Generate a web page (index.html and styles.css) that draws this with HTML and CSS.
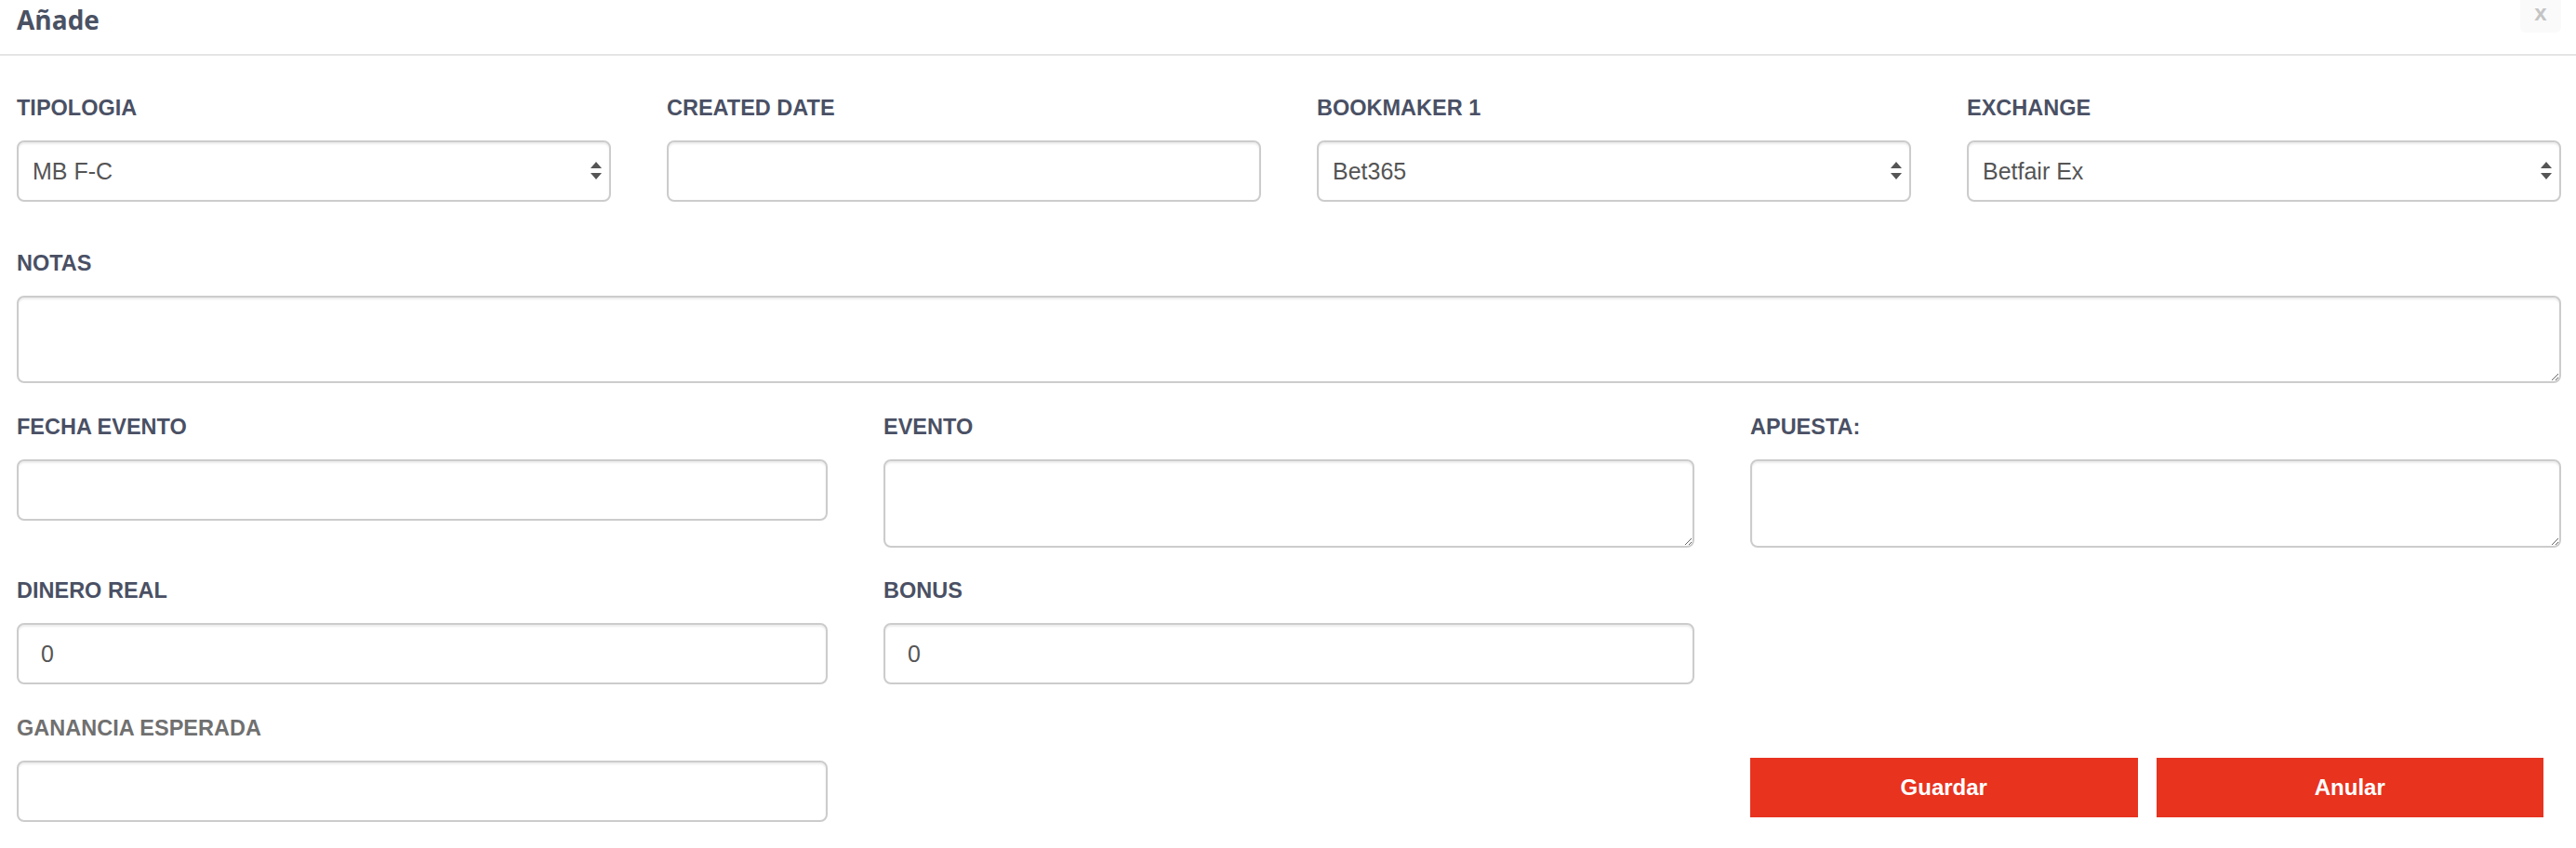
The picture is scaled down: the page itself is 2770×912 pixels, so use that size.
FILE: index.html
```html
<!DOCTYPE html>
<html lang="es">
<head>
<meta charset="utf-8">
<title>Añade</title>
<link rel="stylesheet" href="styles.css">
</head>
<body>
<div class="modal">
  <div class="modal-header">
    <h4 class="modal-title">Añade</h4>
    <div class="close">x</div>
  </div>
  <form class="modal-body">
    <div class="row cols-4 row-first">
      <div class="group">
        <label class="lbl">TIPOLOGIA</label>
        <div class="select-wrap">
          <select class="control select"><option>MB F-C</option></select>
          <svg class="arrows" width="12" height="20" viewBox="0 0 12 20"><path d="M6 0 L12 7 L0 7 Z M0 12 L12 12 L6 19 Z" fill="#555"/></svg>
        </div>
      </div>
      <div class="group">
        <label class="lbl">CREATED DATE</label>
        <input class="control input" type="text" value="">
      </div>
      <div class="group">
        <label class="lbl">BOOKMAKER 1</label>
        <div class="select-wrap">
          <select class="control select"><option>Bet365</option></select>
          <svg class="arrows" width="12" height="20" viewBox="0 0 12 20"><path d="M6 0 L12 7 L0 7 Z M0 12 L12 12 L6 19 Z" fill="#555"/></svg>
        </div>
      </div>
      <div class="group">
        <label class="lbl">EXCHANGE</label>
        <div class="select-wrap">
          <select class="control select"><option>Betfair Ex</option></select>
          <svg class="arrows" width="12" height="20" viewBox="0 0 12 20"><path d="M6 0 L12 7 L0 7 Z M0 12 L12 12 L6 19 Z" fill="#555"/></svg>
        </div>
      </div>
    </div>
    <div class="row row-notes">
      <div class="group">
        <label class="lbl">NOTAS</label>
        <textarea class="control textarea notes"></textarea>
      </div>
    </div>
    <div class="row cols-3 row-event">
      <div class="group">
        <label class="lbl">FECHA EVENTO</label>
        <input class="control input" type="text" value="">
      </div>
      <div class="group">
        <label class="lbl">EVENTO</label>
        <textarea class="control textarea tall"></textarea>
      </div>
      <div class="group">
        <label class="lbl">APUESTA:</label>
        <textarea class="control textarea tall"></textarea>
      </div>
    </div>
    <div class="row cols-3 row-money">
      <div class="group">
        <label class="lbl">DINERO REAL</label>
        <input class="control input" type="text" value="0">
      </div>
      <div class="group">
        <label class="lbl">BONUS</label>
        <input class="control input" type="text" value="0">
      </div>
      <div class="group"></div>
    </div>
    <div class="row cols-3">
      <div class="group">
        <label class="lbl lbl-muted">GANANCIA ESPERADA</label>
        <input class="control input" type="text" value="">
      </div>
      <div class="group"></div>
      <div class="actions">
        <button type="button" class="btn">Guardar</button>
        <button type="button" class="btn">Anular</button>
      </div>
    </div>
  </form>
</div>
</body>
</html>
```
FILE: styles.css
```css
html, body {
  margin: 0;
  padding: 0;
  background: #fff;
}
body {
  font-family: "Liberation Sans", Arial, sans-serif;
}
.modal {
  width: 2770px;
}
.modal-header {
  height: 58px;
  border-bottom: 2px solid #e5e5e5;
  padding: 0 16px 0 18px;
  display: flex;
  justify-content: space-between;
  align-items: flex-start;
}
.modal-title {
  margin: 0;
  padding-top: 2px;
  font-family: "Open Sans", sans-serif;
  font-weight: 700;
  font-size: 28px;
  line-height: 38px;
  color: #4a5163;
}
.close {
  width: 44px;
  height: 35px;
  background: #fafafa;
  border-radius: 0 0 6px 6px;
  color: #c4c4c4;
  font-family: "Liberation Sans", Arial, sans-serif;
  font-weight: 700;
  font-size: 24px;
  line-height: 28px;
  text-align: center;
}
.modal-body {
  margin: 0;
  padding: 40px 16px 0 18px;
}
.row {
  display: grid;
  column-gap: 60px;
  margin-bottom: 28px;
}
.cols-4 {
  grid-template-columns: repeat(4, 1fr);
}
.cols-3 {
  grid-template-columns: repeat(3, 1fr);
}
.row-first {
  margin-bottom: 50px;
}
.row-notes {
  margin-bottom: 31px;
}
.row-event {
  margin-bottom: 30px;
}
.row-money {
  margin-bottom: 31px;
}
.group {
  display: flex;
  flex-direction: column;
  min-width: 0;
}
.lbl {
  display: block;
  font-weight: 700;
  font-size: 23.5px;
  line-height: 32px;
  margin-bottom: 19px;
  color: #4a5064;
}
.lbl-muted {
  color: #707070;
}
.control {
  box-sizing: border-box;
  display: block;
  width: 100%;
  margin: 0;
  border: 2px solid #ccc;
  border-radius: 8px;
  background: #fff;
  box-shadow: inset 0 2px 2px rgba(0, 0, 0, 0.075);
  font-family: "Liberation Sans", Arial, sans-serif;
  font-size: 25px;
  color: #555;
  outline: none;
}
.input {
  height: 66px;
  padding: 0 24px;
}
.select-wrap {
  position: relative;
}
.select {
  height: 66px;
  padding: 0 40px 0 15px;
  appearance: none;
  -webkit-appearance: none;
}
.arrows {
  position: absolute;
  right: 10px;
  top: 23px;
  pointer-events: none;
}
.textarea {
  padding: 12px 24px;
  resize: both;
}
.notes {
  height: 94px;
}
.tall {
  height: 95px;
}
.actions {
  display: flex;
  gap: 20px;
  padding: 48px 19px 0 0;
}
.btn {
  flex: 1;
  height: 64px;
  border: 0;
  border-radius: 0;
  background: #e8331f;
  color: #fff;
  font-family: "Liberation Sans", Arial, sans-serif;
  font-weight: 700;
  font-size: 24px;
  cursor: pointer;
}
```
